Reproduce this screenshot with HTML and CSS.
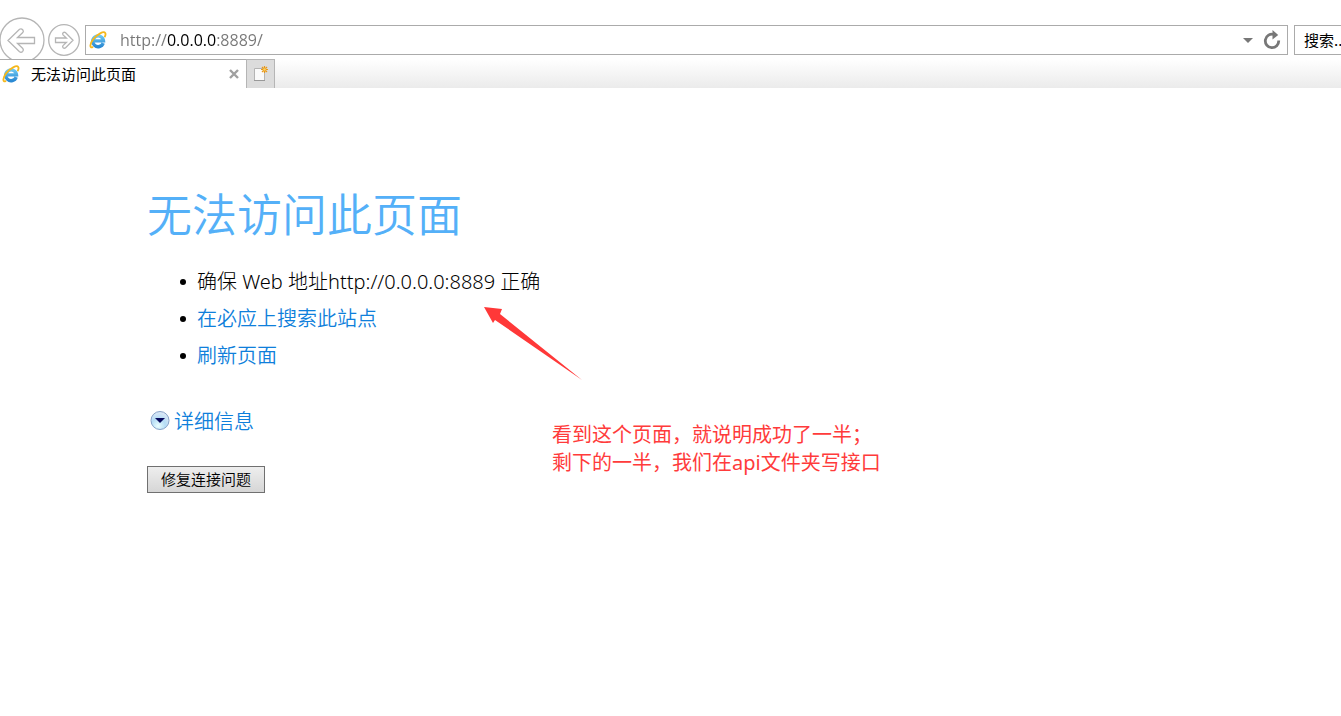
FILE: index.html
```html
<!DOCTYPE html>
<html lang="zh-CN">
<head>
<meta charset="utf-8">
<title>无法访问此页面</title>
<link rel="stylesheet" href="styles.css">
</head>
<body>
<svg class="defs" width="0" height="0" aria-hidden="true">
  <defs>
    <linearGradient id="ie-blue" x1="0" y1="0" x2="0" y2="1">
      <stop offset="0" stop-color="#6cc6f0"/>
      <stop offset="1" stop-color="#2a89d3"/>
    </linearGradient>
    <symbol id="ie" viewBox="0 0 18 18">
      <path d="M14.200 12.100A5.400 5.400 0 1 1 14.500 9.900H5.500" fill="none" stroke="url(#ie-blue)" stroke-width="3.400"/>
      <path d="M3.500 16.200C.6 17.300.6 12.900 4.300 8.100 8.300 3.200 14.700-.2 16.200 1.900c.6.900.4 2.200-.3 3.600" fill="none" stroke="#f5b81c" stroke-width="1.800" stroke-linecap="round"/>
    </symbol>
  </defs>
</svg>
<header class="browser">
  <div class="toolbar">
    <button class="nav back" type="button" aria-label="后退">
      <svg width="46" height="46" viewBox="0 0 46 46"><circle cx="23" cy="23" r="22" /><path d="M9 23.500L20.500 12.200q1.800-1 3.200.5 1.300 1.500.1 2.900L18.500 20.500H35.500V26.500H18.500l5.300 5q1.200 1.500-.1 2.900-1.500 1.400-3.200.4z"/></svg>
    </button>
    <button class="nav forward" type="button" aria-label="前进">
      <svg width="32" height="32" viewBox="0 0 32 32"><circle cx="16" cy="16" r="15.300"/><path d="M25 16.200l-7.600-7.700q-1.300-.7-2.300.3-.9 1-.1 2.100l3.400 3.100H7.500v4.500h10.900l-3.400 3.100q-.8 1.100.1 2.100 1 1 2.300.3z"/></svg>
    </button>
    <div class="address">
      <svg class="ie" width="18" height="18"><use href="#ie"/></svg>
      <input class="url" type="text" aria-label="地址" value="http://0.0.0.0:8889/">
      <button class="tool" type="button" aria-label="显示地址列表"><svg width="10" height="6"><path d="M0 1h10L5 6z" fill="#777"/></svg></button>
      <button class="tool" type="button" aria-label="刷新"><svg width="18" height="20" viewBox="0 0 18 20"><path d="M15.700 10.500A6.700 6.700 0 1 1 11 4.500" fill="none" stroke="#777" stroke-width="2.800"/><path d="M9.500 0l5.700 5-5.700 4.500z" fill="#777"/></svg></button>
    </div>
    <input class="search" type="text" aria-label="搜索" value="搜索...">
  </div>
  <nav class="tabs">
    <div class="tab">
      <svg class="ie" width="18" height="18"><use href="#ie"/></svg>
      <span class="tab-title">无法访问此页面</span>
      <button class="tool" type="button" aria-label="关闭标签页"><svg width="10" height="10"><path d="M1 1l8 8M9 1L1 9" stroke="#a0a0a0" stroke-width="2.400"/></svg></button>
    </div>
    <button class="new-tab" type="button" aria-label="新建标签页">
      <svg width="16" height="17" viewBox="0 0 16 17"><path d="M1.500 2.500h10v12h-10z" fill="#fafafa" stroke="#b4b4b4"/><path d="M1 14.500h11" stroke="#999"/><path d="M11.500 0v7M8 3.500h7M9 1l5 5M14 1L9 6" stroke="#e8981a" stroke-width="1.200"/><circle cx="11.500" cy="3.500" r="1.300" fill="#ffd45e"/></svg>
    </button>
  </nav>
</header>
<main class="page">
  <h1 class="title">无法访问此页面</h1>
  <ul class="tips">
    <li>确保 Web 地址http://0.0.0.0:8889 正确</li>
    <li><a href="#search">在必应上搜索此站点</a></li>
    <li><a href="#refresh">刷新页面</a></li>
  </ul>
  <a class="details" href="#details">
    <svg width="20" height="20" viewBox="0 0 20 20"><defs><radialGradient id="ball" cx=".4" cy=".8" r=".8"><stop offset="0" stop-color="#eaffff"/><stop offset=".5" stop-color="#b5dcf5"/><stop offset="1" stop-color="#dfe9f6"/></radialGradient></defs><circle cx="10" cy="9.500" r="9" fill="url(#ball)" stroke="#86a2c8"/><path d="M5 7h10l-5 5z" fill="#07095c"/></svg>
    <span>详细信息</span>
  </a>
  <button class="repair" type="button">修复连接问题</button>
  <svg class="arrow" width="100" height="76" viewBox="0 0 100 76" aria-hidden="true"><path d="M0 0l18 2-2 5 82 66L11 13l-2 3z" fill="#ff3838"/></svg>
  <p class="note">看到这个页面，就说明成功了一半；<br>剩下的一半，我们在api文件夹写接口</p>
</main>
</body>
</html>
```
FILE: styles.css
```css
* { box-sizing: border-box; }
body {
  margin: 0;
  background: #fff;
  color: #000;
  font-family: "Noto Sans", "Noto Sans CJK SC", sans-serif;
  overflow-x: hidden;
}
button { padding: 0; border: 0; background: none; font-family: inherit; }
svg { display: block; flex: none; }
.defs { position: absolute; }
.toolbar {
  display: flex;
  align-items: center;
  height: 59px;
  padding-top: 21px;
  overflow: hidden;
}
.nav { flex: none; }
.nav svg { fill: #fff; stroke: #b5b5b5; stroke-width: 1.3; }
.back { margin-left: -1px; }
.forward { margin: 0 5px 0 3px; }
.address {
  display: flex;
  flex: 1;
  align-items: center;
  min-width: 0;
  height: 30px;
  padding: 0 6px 0 3px;
  border: 1px solid #ababab;
}
.url {
  flex: 1;
  min-width: 0;
  height: 28px;
  margin-left: 13px;
  padding: 0;
  border: 0;
  outline: 0;
  font: 16px "Open Sans", sans-serif;
  color: transparent;
  background: linear-gradient(90deg, #777 47px, #000 47px, #000 96px, #777 96px);
  background-clip: text;
  -webkit-background-clip: text;
}
.tool + .tool { margin-left: 10px; }
.search {
  flex: none;
  width: 56px;
  height: 30px;
  margin: 0 -9px 0 6px;
  padding: 0 0 2px 9px;
  border: 1px solid #ababab;
  font: 15px "Noto Sans CJK SC", sans-serif;
}
.tabs {
  display: flex;
  height: 29px;
  background: linear-gradient(#fff, #ebebeb);
}
.tab {
  display: flex;
  align-items: center;
  width: 246px;
  padding: 0 7px 0 2px;
  border-top: 1px solid #ababab;
  background: #fff;
  font-size: 15px;
  line-height: 20px;
}
.tab-title { flex: 1; margin-left: 11px; }
.new-tab {
  display: flex;
  align-items: center;
  justify-content: center;
  width: 29px;
  border: 1px solid #b5b5b5;
  border-bottom: 0;
  background: #dcdcdc;
}
.page { position: relative; padding: 93px 147px 40px; }
.title {
  margin: 0;
  color: #54b0f8;
  font-size: 45px;
  font-weight: 350;
  line-height: 68px;
}
.tips {
  margin: 14px 0 0;
  padding: 0 0 0 33px;
  list-style: none;
  font-size: 20px;
  font-weight: 300;
  line-height: 37px;
}
.tips li { display: flex; align-items: center; }
.tips li::before {
  content: "";
  width: 6px;
  height: 6px;
  margin-right: 11px;
  border-radius: 50%;
  background: #000;
}
.tips a, .details { color: #0f7fdb; text-decoration: none; }
.tips a { font-weight: 350; }
.details {
  display: flex;
  align-items: center;
  gap: 4px;
  width: max-content;
  margin: 34px 0 0 3px;
  font-size: 20px;
  font-weight: 350;
  line-height: 28px;
}
.details svg { margin-bottom: 2px; }
.repair {
  display: block;
  margin-top: 30px;
  padding: 0 13px;
  border: 1px solid #707070;
  background: linear-gradient(#eee, #d6d6d6);
  font-size: 15px;
  font-weight: 350;
  line-height: 25px;
}
.arrow { position: absolute; left: 484px; top: 219px; }
.note {
  position: absolute;
  left: 552px;
  top: 333px;
  margin: 0;
  color: #ff3b3b;
  font-size: 20px;
  line-height: 28px;
  white-space: nowrap;
}
```
